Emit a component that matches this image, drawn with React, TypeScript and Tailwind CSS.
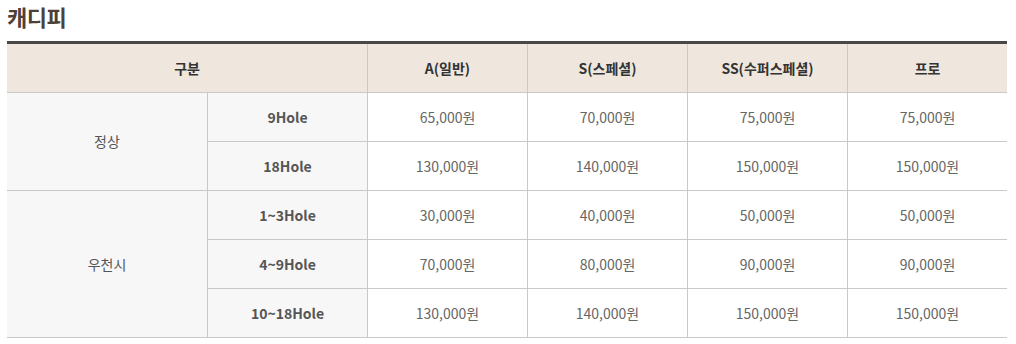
import React from "react";

const cols = ["A(일반)", "S(스페셜)", "SS(수퍼스페셜)", "프로"];

const groups = [
  {
    name: "정상",
    rows: [
      { label: "9Hole", prices: ["65,000원", "70,000원", "75,000원", "75,000원"] },
      { label: "18Hole", prices: ["130,000원", "140,000원", "150,000원", "150,000원"] },
    ],
  },
  {
    name: "우천시",
    rows: [
      { label: "1~3Hole", prices: ["30,000원", "40,000원", "50,000원", "50,000원"] },
      { label: "4~9Hole", prices: ["70,000원", "80,000원", "90,000원", "90,000원"] },
      { label: "10~18Hole", prices: ["130,000원", "140,000원", "150,000원", "150,000원"] },
    ],
  },
];

export default function App() {
  return (
    <div
      className="bg-white w-[1016px] h-[344px] pl-[7px]"
      style={{ fontFamily: '"Noto Sans CJK KR", "Noto Sans", sans-serif' }}
    >
      <h2 className="text-[22px] leading-[30px] font-bold text-[#4d4037] pt-[1px] mb-[10px] tracking-[-0.5px]">
        캐디피
      </h2>
      <table className="w-[1000px] border-separate border-spacing-0 border-t-[3px] border-[#4a4646] table-fixed text-[14px]">
        <colgroup>
          <col className="w-[200px]" />
          <col className="w-[160px]" />
          <col className="w-[160px]" />
          <col className="w-[160px]" />
          <col className="w-[160px]" />
          <col className="w-[160px]" />
        </colgroup>
        <thead>
          <tr>
            <th
              colSpan={2}
              className="h-[49px] p-0 bg-[#efe7de] border-b border-[#c9c9c9] font-bold text-[#333] text-center align-middle"
            >
              구분
            </th>
            {cols.map((c) => (
              <th
                key={c}
                className="h-[49px] p-0 bg-[#efe7de] border-b border-l border-[#c9c9c9] font-bold text-[#333] text-center align-middle"
              >
                {c}
              </th>
            ))}
          </tr>
        </thead>
        <tbody>
          {groups.map((g) =>
            g.rows.map((r, i) => (
              <tr key={g.name + r.label}>
                {i === 0 && (
                  <td
                    rowSpan={g.rows.length}
                    className="p-0 bg-[#f7f7f7] border-b border-[#c9c9c9] text-[#555] text-center align-middle"
                  >
                    {g.name}
                  </td>
                )}
                <td className="h-[49px] p-0 bg-[#f7f7f7] border-b border-l border-[#c9c9c9] font-bold text-[#555] text-center align-middle">
                  {r.label}
                </td>
                {r.prices.map((p, j) => (
                  <td
                    key={j}
                    className="h-[49px] p-0 bg-white border-b border-l border-[#c9c9c9] text-[#666] text-center align-middle"
                  >
                    {p}
                  </td>
                ))}
              </tr>
            ))
          )}
        </tbody>
      </table>
    </div>
  );
}
